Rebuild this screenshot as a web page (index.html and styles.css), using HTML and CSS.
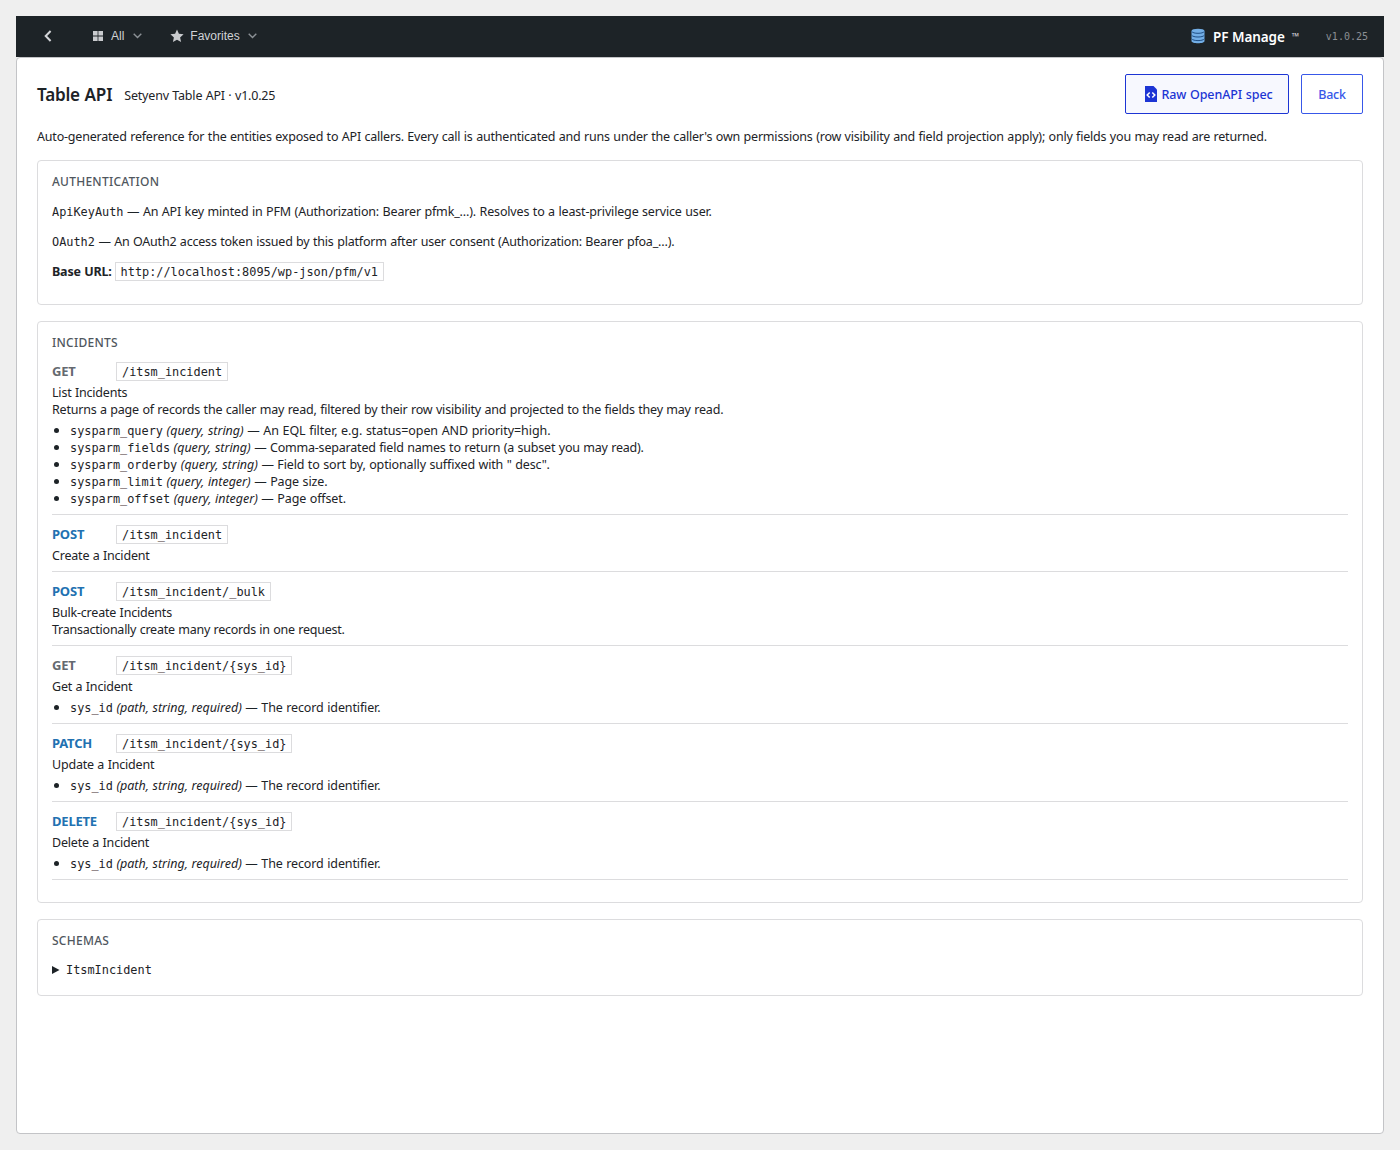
FILE: index.html
```html
<!DOCTYPE html>
<html lang="en">
<head>
<meta charset="utf-8">
<title>Table API</title>
<link rel="stylesheet" href="styles.css">
</head>
<body>
<header class="topbar">
  <svg class="ico-back" width="8" height="12" viewBox="0 0 8 12"><path d="M6.6 1 L1.7 6 L6.6 11" fill="none" stroke="#d3d5d8" stroke-width="2"/></svg>
  <nav class="menu">
    <a class="menu-item menu-all">
      <svg width="10" height="10" viewBox="0 0 10 10" fill="#c9cbce"><path d="M0 0h4.600v4.500H0zM5.400 0H10v4.500H5.400zM0 5.500h4.600V10H0zM5.400 5.500H10V10H5.400z"/></svg>
      <span class="all-label">All</span>
      <svg class="chev" width="9" height="6" viewBox="0 0 9 6"><path d="M.7.8 4.5 4.6 8.3.8" fill="none" stroke="#8c9196" stroke-width="1.4"/></svg>
    </a>
    <a class="menu-item menu-fav">
      <svg class="star" width="14" height="14" viewBox="0 0 14 14"><path fill="#c9cbce" d="M7 .5l1.9 4.3 4.7.5-3.5 3.1 1 4.7L7 10.7l-4.1 2.4 1-4.7L.4 5.3l4.7-.5z"/></svg>
      <span class="fav-label">Favorites</span>
      <svg class="chev" width="9" height="6" viewBox="0 0 9 6"><path d="M.7.8 4.5 4.6 8.3.8" fill="none" stroke="#8c9196" stroke-width="1.4"/></svg>
    </a>
  </nav>
  <div class="brand">
    <svg width="14" height="16" viewBox="0 0 14 16"><path fill="#72aee6" d="M.5 3v10c0 1.300 3 2.300 6.500 2.300s6.500-1 6.500-2.300V3z"/><ellipse cx="7" cy="3" rx="6.500" ry="2.300" fill="#72aee6"/><path fill="none" stroke="#1f4f86" stroke-width="1" d="M.5 3.300c1 1.500 3.500 2 6.500 2s5.500-.5 6.500-2M.5 7c1 1.500 3.500 2 6.500 2s5.500-.5 6.500-2M.5 10.600c1 1.500 3.500 2 6.500 2s5.500-.5 6.500-2"/></svg>
    <span class="brand-name">PF Manage</span>
    <span class="tm">™</span>
    <span class="version">v1.0.25</span>
  </div>
</header>
<main class="panel">
  <div class="head">
    <h1>Table API</h1>
    <span class="subtitle">Setyenv Table API · v1.0.25</span>
    <div class="actions">
      <a class="btn btn-raw"><svg width="12" height="16" viewBox="0 0 12 16"><path fill="#1d35d4" d="M0 0h8.500L12 3.500V16H0z"/><path fill="none" stroke="#fff" stroke-width="1.500" d="M4.700 6.500 2.200 9l2.500 2.500M7.300 6.500 9.800 9l-2.500 2.500"/></svg><span class="raw-label">Raw OpenAPI spec</span></a>
      <a class="btn"><span class="back-label">Back</span></a>
    </div>
  </div>
  <p class="intro"><span>Auto-generated reference for the entities exposed to API callers. Every call is authenticated and runs under the caller's own permissions (row visibility and field projection apply); only fields you may read are returned.</span></p>

  <section class="card auth">
    <h2>Authentication</h2>
    <p class="key"><code>ApiKeyAuth</code> — An API key minted in PFM (Authorization: Bearer pfmk_…). Resolves to a least-privilege service user.</p>
    <p><code>OAuth2</code> — An OAuth2 access token issued by this platform after user consent (Authorization: Bearer pfoa_…).</p>
    <p class="base"><strong>Base URL:</strong><code class="box">http://localhost:8095/wp-json/pfm/v1</code></p>
  </section>

  <section class="card incidents">
    <h2>Incidents</h2>
    <article class="op">
      <div class="route"><strong class="verb get">GET</strong><code class="box">/itsm_incident</code></div>
      <p>List Incidents</p>
      <p>Returns a page of records the caller may read, filtered by their row visibility and projected to the fields they may read.</p>
      <ul>
        <li class="filter"><code>sysparm_query</code> <em>(query, string)</em> — An EQL filter, e.g. status=open AND priority=high.</li>
        <li><code>sysparm_fields</code> <em>(query, string)</em> — Comma-separated field names to return (a subset you may read).</li>
        <li class="sort"><code>sysparm_orderby</code> <em>(query, string)</em> — Field to sort by, optionally suffixed with " desc".</li>
        <li class="param"><code>sysparm_limit</code> <em>(query, integer)</em> — Page size.</li>
        <li class="param"><code>sysparm_offset</code> <em>(query, integer)</em> — Page offset.</li>
      </ul>
    </article>
    <article class="op">
      <div class="route"><strong class="verb">POST</strong><code class="box">/itsm_incident</code></div>
      <p>Create a Incident</p>
    </article>
    <article class="op">
      <div class="route"><strong class="verb">POST</strong><code class="box">/itsm_incident/_bulk</code></div>
      <p>Bulk-create Incidents</p>
      <p class="note">Transactionally create many records in one request.</p>
    </article>
    <article class="op">
      <div class="route"><strong class="verb get">GET</strong><code class="box">/itsm_incident/{sys_id}</code></div>
      <p>Get a Incident</p>
      <ul><li class="param"><code>sys_id</code> <em>(path, string, required)</em> — The record identifier.</li></ul>
    </article>
    <article class="op">
      <div class="route"><strong class="verb">PATCH</strong><code class="box">/itsm_incident/{sys_id}</code></div>
      <p>Update a Incident</p>
      <ul><li class="param"><code>sys_id</code> <em>(path, string, required)</em> — The record identifier.</li></ul>
    </article>
    <article class="op">
      <div class="route"><strong class="verb">DELETE</strong><code class="box">/itsm_incident/{sys_id}</code></div>
      <p>Delete a Incident</p>
      <ul><li class="param"><code>sys_id</code> <em>(path, string, required)</em> — The record identifier.</li></ul>
    </article>
  </section>

  <section class="card schemas">
    <h2>Schemas</h2>
    <div class="summary"><svg width="8" height="8" viewBox="0 0 8 8"><path fill="#1d2327" d="M0 0l7.500 4L0 8z"/></svg><code>ItsmIncident</code></div>
  </section>
</main>
</body>
</html>
```
FILE: styles.css
```css
* { box-sizing: border-box; }
body {
  margin: 0;
  padding: 16px;
  height: 1150px;
  display: flex;
  flex-direction: column;
  background: #efefef;
  color: #1d2327;
  font: 12.5px/17px "Noto Sans", "Open Sans", sans-serif;
  letter-spacing: -0.2px;
  word-spacing: 0.43px;
  white-space: nowrap;
}
h1, h2, p, ul { margin: 0; padding: 0; }
code { font: 11.88px/17px "DejaVu Sans Mono", monospace; letter-spacing: 0; }
em { letter-spacing: -0.02px; }
svg { display: block; flex: none; }

.topbar {
  height: 41px;
  flex: none;
  display: flex;
  align-items: center;
  padding: 0 16px 1px 28px;
  background: #1d2327;
  color: #d0d2d5;
}
.menu { display: flex; margin-left: 41px; font: 12px/16px "Liberation Sans", Arial, sans-serif; letter-spacing: 0; }
.menu-item { display: flex; align-items: center; }
.menu-all { gap: 8px; }
.menu-all .chev { margin-left: 1px; }
.menu-fav { margin-left: 28px; gap: 6px; }
.chev { margin-left: 2px; margin-top: -1px; }
.brand { display: flex; align-items: center; margin-left: auto; }
.brand-name { margin-left: 8px; padding-top: 2px; color: #fff; font-weight: 600; font-size: 13.5px; letter-spacing: -0.12px; }
.tm { margin-left: 7px; font-size: 9.5px; }
.version { margin-left: 27px; padding-top: 1px; color: #8c8f94; font: 10px/14px "DejaVu Sans Mono", monospace; letter-spacing: 0; }

.panel {
  flex: 1;
  padding: 16px 20px;
  background: #fff;
  border: 1px solid #c3c4c7;
  border-radius: 4px;
}
.head { display: flex; align-items: center; height: 40px; }
h1 { padding-top: 2px; font-size: 17.1px; line-height: 24px; font-weight: 600; }
.subtitle { margin-left: 12px; padding-top: 3px; }
.actions { display: flex; gap: 12px; margin-left: auto; }
.btn {
  height: 40px;
  width: 62px;
  display: flex;
  align-items: center;
  justify-content: center;
  border: 1px solid #3858e9;
  border-radius: 2px;
  color: #3858e9;
  font-weight: 500;
}
.btn-raw { width: 164px; padding-left: 4px; gap: 4px; color: #1d35d4; border-color: #1d35d4; background: #f7f8fe; letter-spacing: -0.08px; }
.intro { margin-top: 14px; }

.card { border: 1px solid #dcdcde; border-radius: 4px; padding: 12px 14px; }
h2 { font-size: 12px; line-height: 17px; font-weight: 500; color: #50575e; text-transform: uppercase; letter-spacing: 0.25px; }
.auth { margin-top: 15px; height: 145px; }
.auth p { margin-top: 13px; height: 17px; }
.auth .key { letter-spacing: -0.16px; }
.auth .base { display: flex; align-items: center; gap: 3px; }
.box { height: 19px; padding: 1px 5px 0; border: 1px solid #dcdcde; }
.incidents { margin-top: 16px; height: 582px; }
.incidents h2 { margin-bottom: 1px; }
.op { padding: 10px 0 7px; border-bottom: 1px solid #dcdcde; }
.route { display: flex; height: 19px; margin-bottom: 3px; }
.verb { width: 64px; line-height: 19px; font-size: 13px; color: #2271b1; }
.verb.get { color: #646970; }
.note { letter-spacing: -0.24px; }
.op ul { margin-top: 4px; padding-left: 18px; list-style: none; }
.op li { height: 17px; }
.op li::before {
  content: "";
  display: inline-block;
  width: 5px;
  height: 5px;
  margin: 0 11px 0 -16px;
  border-radius: 50%;
  background: #1d2327;
  vertical-align: 2px;
}
.filter { letter-spacing: -0.07px; }
.sort { letter-spacing: -0.14px; }
.param { letter-spacing: -0.12px; }
.schemas { margin-top: 16px; height: 77px; }
.summary { display: flex; align-items: center; gap: 6px; margin-top: 12px; }
.summary code { padding-top: 1px; }
```
